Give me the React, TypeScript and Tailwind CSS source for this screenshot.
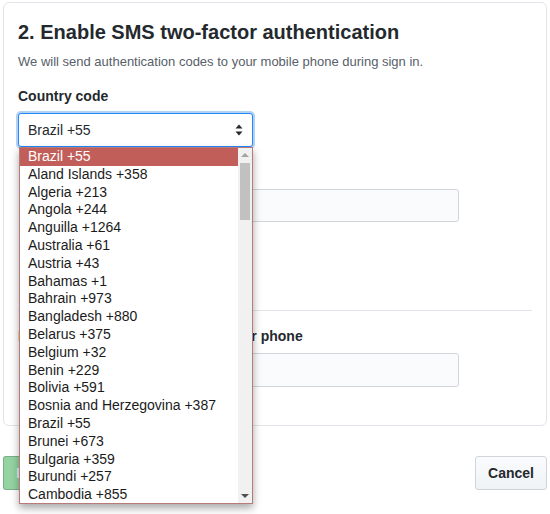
import React from 'react';

const countries = [
  'Brazil +55',
  'Aland Islands +358',
  'Algeria +213',
  'Angola +244',
  'Anguilla +1264',
  'Australia +61',
  'Austria +43',
  'Bahamas +1',
  'Bahrain +973',
  'Bangladesh +880',
  'Belarus +375',
  'Belgium +32',
  'Benin +229',
  'Bolivia +591',
  'Bosnia and Herzegovina +387',
  'Brazil +55',
  'Brunei +673',
  'Bulgaria +359',
  'Burundi +257',
  'Cambodia +855',
];

const SelectArrows = () => (
  <svg width="8" height="12" viewBox="0 0 8 12" className="text-[#24292e]">
    <path d="M4 0.5 L7.5 4.5 H0.5 Z" fill="currentColor" />
    <path d="M4 11.5 L7.5 7.5 H0.5 Z" fill="currentColor" />
  </svg>
);

const CountryDropdown = () => (
  <div className="absolute left-px top-[34px] z-10 flex h-[357px] w-[234px] border border-[#b97b79] bg-white shadow-[0_4px_8px_rgba(0,0,0,0.35)]">
    <ul className="flex-1 overflow-hidden text-[14px] leading-[17.8px] text-[#1b1b1b]">
      {countries.map((c, i) => (
        <li
          key={i}
          className={`whitespace-nowrap pl-2 ${i === 0 ? 'bg-[#c15e59] text-white' : ''}`}
        >
          {c}
        </li>
      ))}
    </ul>
    {/* scrollbar */}
    <div className="flex w-[14px] flex-col items-center bg-[#f1f1f1]">
      <svg width="8" height="15" viewBox="0 0 8 15">
        <path d="M4 5 L8 9 H0 Z" fill="#a3a3a3" />
      </svg>
      <div className="h-[57px] w-[10px] bg-[#c1c1c1]" />
      <div className="flex-1" />
      <svg width="8" height="15" viewBox="0 0 8 15">
        <path d="M4 10 L8 6 H0 Z" fill="#505050" />
      </svg>
    </div>
  </div>
);

export default function App() {
  return (
    <div className="min-h-[514px] bg-white px-[3px] pt-[2px] font-['Liberation_Sans',Arial,sans-serif] text-[#24292e]">
      <div className="rounded-md border border-[#e1e4e8] px-[14px] pb-[38px] pt-[17px]">
        <h2 className="text-[20px] font-bold leading-[25px]">2. Enable SMS two-factor authentication</h2>
        <p className="mt-[7px] text-[13px] leading-[20px] text-[#586069]">
          We will send authentication codes to your mobile phone during sign in.
        </p>

        <div className="mt-[14px]">
          <label className="block text-[14px] font-bold leading-[20px]">Country code</label>
          <div className="relative mt-[7px] w-[235px]">
            <div className="flex h-[34px] items-center justify-between rounded-[3px] border border-[#2188ff] bg-white pl-[9px] pr-[9px] text-[14px] shadow-[0_0_0_2px_rgba(3,102,214,0.3)]">
              <span>Brazil +55</span>
              <SelectArrows />
            </div>
            <CountryDropdown />
          </div>
        </div>

        {/* phone number field, hidden behind the open list */}
        <div className="mt-[12px] pl-[20px]">
          <div className="h-[20px]" />
          <div className="mt-[10px] h-[33px] w-[421px] rounded-[3px] border border-[#d1d5da] bg-[#fafbfc]" />
          <div className="mt-[22px] h-[34px] w-[200px] rounded-[3px] border border-[#d1d5da] bg-[#fafbfc]" />
        </div>

        <div className="mt-[32px] border-t border-[#e1e4e8]" />

        <div className="mt-[15px]">
          <label className="block text-[14px] font-bold leading-[20px]">
            Enter the six-digit code sent to your phone
          </label>
          <div className="ml-[20px] mt-[7px] h-[34px] w-[421px] rounded-[3px] border border-[#d1d5da] bg-[#fafbfc]" />
        </div>
      </div>

      <div className="mt-[30px] flex items-center justify-between">
        <button className="h-[34px] rounded-[3px] border border-[rgba(27,31,35,0.2)] bg-[#94d3a2] px-3 text-[14px] font-bold text-[rgba(255,255,255,0.75)]">
          Enable
        </button>
        <button className="h-[34px] rounded-[3px] border border-[#d1d5da] bg-[#fafbfc] bg-gradient-to-b from-[#fafbfc] to-[#eff3f6] px-3 text-[14px] font-bold text-[#24292e]">
          Cancel
        </button>
      </div>
    </div>
  );
}
